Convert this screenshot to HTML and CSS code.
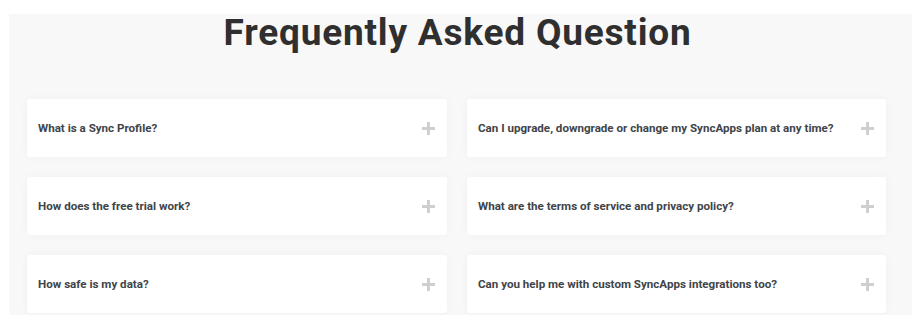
FILE: index.html
```html
<!DOCTYPE html>
<html lang="en">
<head>
    <meta charset="UTF-8">
    <meta name="viewport" content="width=device-width, initial-scale=1.0">
    <title>FAQ</title>
    <link rel="stylesheet" href="styles.css">
</head>
<body>
    <section class="faq">
        <h1 class="faq-title">Frequently Asked Question</h1>

        <div class="faq-grid">
            <div class="faq-item">
                <span class="faq-question">What is a Sync Profile?</span>
                <span class="faq-toggle"></span>
            </div>
            <div class="faq-item">
                <span class="faq-question">Can I upgrade, downgrade or change my SyncApps plan at any time?</span>
                <span class="faq-toggle"></span>
            </div>
            <div class="faq-item">
                <span class="faq-question">How does the free trial work?</span>
                <span class="faq-toggle"></span>
            </div>
            <div class="faq-item">
                <span class="faq-question">What are the terms of service and privacy policy?</span>
                <span class="faq-toggle"></span>
            </div>
            <div class="faq-item">
                <span class="faq-question">How safe is my data?</span>
                <span class="faq-toggle"></span>
            </div>
            <div class="faq-item">
                <span class="faq-question">Can you help me with custom SyncApps integrations too?</span>
                <span class="faq-toggle"></span>
            </div>
        </div>
    </section>
</body>
</html>
```

FILE: styles.css
```css
body {
    margin: 0;
    padding: 14px 0 0;
    background-color: #ffffff;
    font-family: Roboto, "Liberation Sans", Arial, sans-serif;
    color: #333333;
    overflow: hidden;
}

/* Grey panel behind the whole FAQ block */
.faq {
    margin: 0 2px 0 9px;
    height: 301px;
    background-color: #f8f8f8;
}

.faq-title {
    margin: 0;
    padding-right: 6px;
    font-size: 37px;
    line-height: 37px;
    letter-spacing: 0.8px;
    font-weight: 700;
    text-align: center;
    color: #2f2f2f;
}

.faq-grid {
    display: grid;
    grid-template-columns: 420px 419px;
    column-gap: 20px;
    row-gap: 20px;
    margin: 48px 0 0 18px;
}

.faq-item {
    display: flex;
    align-items: center;
    justify-content: space-between;
    height: 58px;
    padding: 0 12px 0 11px;
    background: #ffffff;
    border-radius: 3px;
    box-shadow: 0 0 10px rgba(0, 0, 0, 0.035);
    box-sizing: border-box;
}

.faq-question {
    font-size: 11.6px;
    font-weight: 700;
    color: #404448;
}

/* Plus sign */
.faq-toggle {
    position: relative;
    width: 13px;
    height: 13px;
    flex-shrink: 0;
}

.faq-toggle::before,
.faq-toggle::after {
    content: "";
    position: absolute;
    background: #cfcfcf;
}

.faq-toggle::before {
    left: 0;
    top: 5px;
    width: 13px;
    height: 3px;
}

.faq-toggle::after {
    left: 5px;
    top: 0;
    width: 3px;
    height: 13px;
}
```
